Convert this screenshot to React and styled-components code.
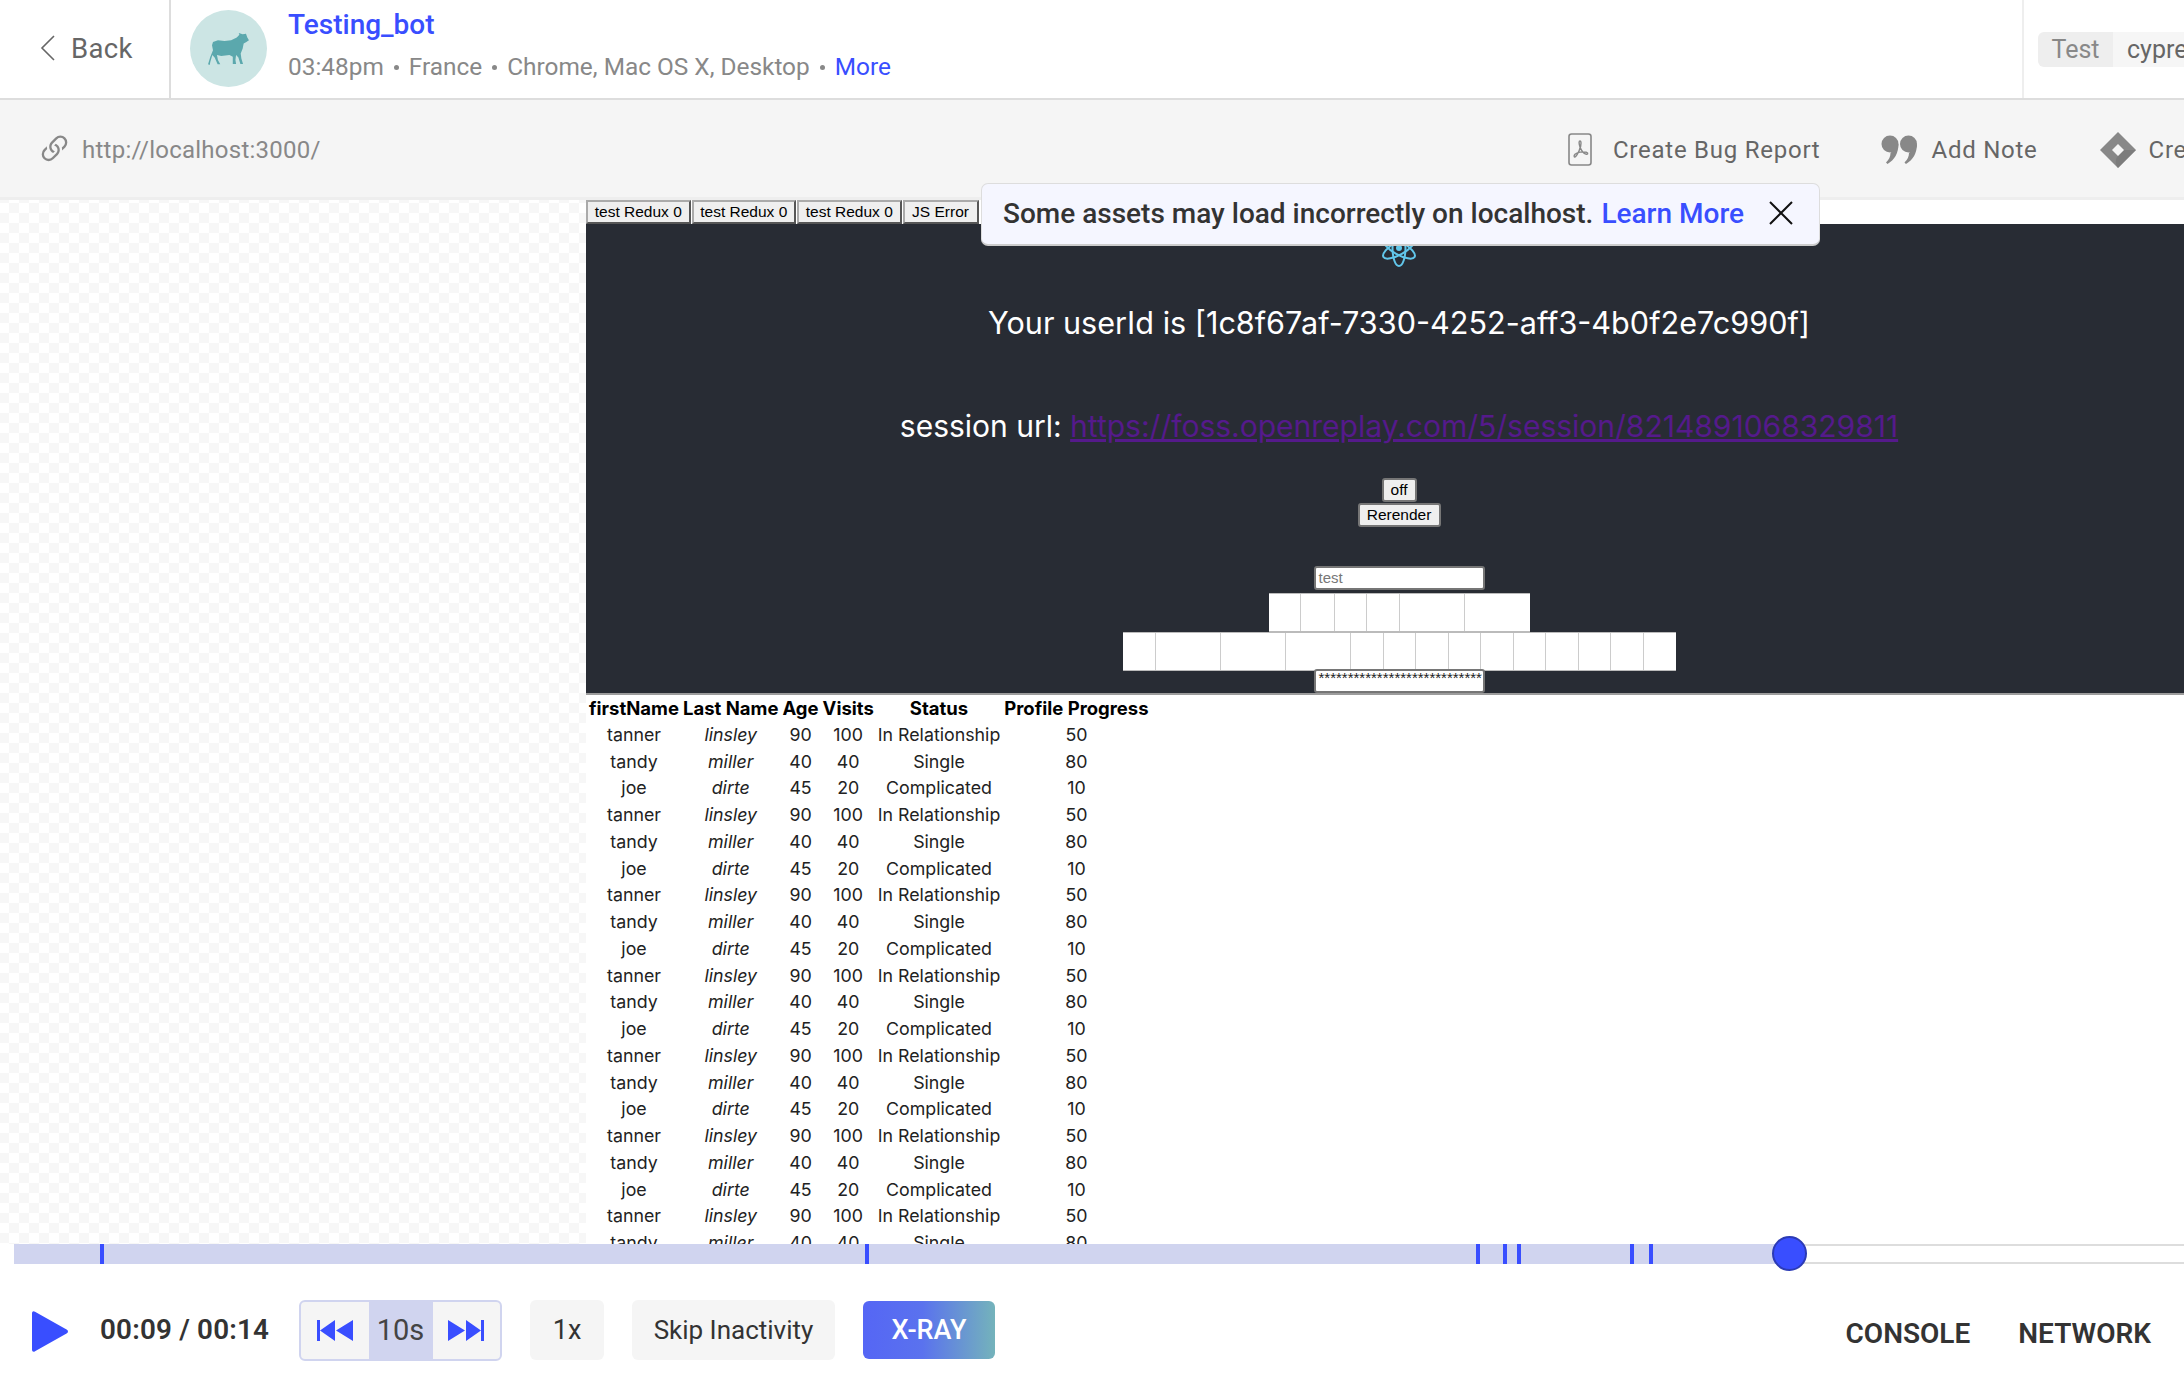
import React from 'react';
import styled, { createGlobalStyle } from 'styled-components';
import { BsLink45Deg } from 'react-icons/bs';

const Global = createGlobalStyle`
  html, body { margin: 0; padding: 0; background: #fff; overflow: hidden; }
  #root { width: 2184px; height: 1396px; overflow: hidden; }
  * { box-sizing: border-box; }
`;

const Page = styled.div`
  width: 2184px; height: 1396px; display: flex; flex-direction: column;
  font-family: Roboto, "Liberation Sans", sans-serif; color: #666; overflow: hidden; position: relative;
`;

/* header */
const Header = styled.header`
  height: 100px; flex: none; display: flex; align-items: stretch; background: #fff;
  border-bottom: 2px solid #ddd;
`;
const BackLink = styled.div`
  width: 171px; flex: none; display: flex; align-items: center; gap: 16px; padding-left: 40px;
  border-right: 2px solid #ddd; font-size: 27.5px; color: #666; letter-spacing: .3px;
  padding-bottom: 2px;
`;
const UserBlock = styled.div`
  flex: 1; display: flex; align-items: center; gap: 21px; padding-left: 19px;
`;
const Avatar = styled.div`
  width: 77px; height: 77px; border-radius: 50%; background: #cce5e4; display: flex;
  align-items: center; justify-content: center; flex: none; margin-bottom: 1px;
`;
const UserText = styled.div`
  display: flex; flex-direction: column; gap: 10px; margin-top: -6px;
`;
const UserName = styled.div`
  font-size: 28px; line-height: 32px; font-weight: 500; color: #394eff;
`;
const Meta = styled.div`
  font-size: 24.4px; line-height: 32px; color: #888; display: flex; align-items: center; white-space: nowrap;
`;
const Dot = styled.span`
  width: 5px; height: 5px; border-radius: 50%; background: #888; margin: 0 10px;
`;
const Accent = styled.span`
  color: #394eff;
`;
const TagArea = styled.div`
  width: 162px; flex: none; border-left: 2px solid #eee; display: flex; align-items: center; padding-left: 14px;
  overflow: hidden; margin-bottom: 0;
`;
const TagGroup = styled.div`
  display: flex; height: 35px; border-radius: 6px; overflow: hidden; font-size: 25px; line-height: 35px; flex: none;
`;
const TagKey = styled.span`
  width: 75px; background: #eee; color: #888; text-align: center;
`;
const TagValue = styled.span`
  background: #f6f6f6; color: #666; padding: 0 14px; 
`;

/* url bar */
const UrlBar = styled.div`
  height: 100px; flex: none; display: flex; align-items: center; background: #f5f5f5;
  border-bottom: 3px solid #eee; overflow: hidden; padding-top: 2px;
`;
const UrlText = styled.div`
  flex: 0 0 1568px; display: flex; align-items: center; gap: 9px; padding-left: 36px; font-size: 24px; color: #888; letter-spacing: .25px;
`;
const Actions = styled.div`
  display: flex; align-items: center; gap: 61px; flex: none; font-size: 24px; color: #666; letter-spacing: .75px;
`;
const Action = styled.div`
  display: flex; align-items: center; gap: ${p => p.$gap || 13}px; white-space: nowrap;
`;
const DiamondAction = styled(Action)`
  margin-left: 1px;
`;

/* stage */
const Stage = styled.div`
  height: 1044px; flex: none; display: flex; position: relative; overflow: hidden;
`;
const Checker = styled.div`
  width: 586px; flex: none;
  background: repeating-conic-gradient(#f7f7f7 0 25%, #fff 0 50%) -1px 3px / 20px 20px;
`;
const Replay = styled.div`
  flex: 1; display: flex; flex-direction: column; align-items: flex-start; background: #fff; overflow: hidden; min-width: 0;
`;
const Tabs = styled.div`
  display: flex; height: 24px; flex: none; padding-left: 0;
`;
const NativeButton = styled.button`
  font-family: "Liberation Sans", Arial, sans-serif; font-size: 15.5px; color: #000; background: #efefef;
  border: 2px outset #aaa; padding: 0; height: 100%; margin: 0; width: ${p => p.$w}px; flex: none; margin-right: 1px;
  display: flex; align-items: center; justify-content: center; 
`;
const AppShell = styled.div`
  width: 1626px; height: 469px; flex: none; background: #282c34; display: flex; flex-direction: column; align-items: center;
  color: #fff; overflow: hidden;
`;
const Logo = styled.div`
  height: 44px; margin-top: 2px; line-height: 0; flex: none;
`;
const UserId = styled.p`
  margin: 31px 0 0; font-family: Inter, Roboto, sans-serif; font-size: 30.6px; line-height: 44px; font-weight: 400; white-space: nowrap;
`;
const SessionLine = styled.p`
  margin: 59px 0 0; font-family: Inter, Roboto, sans-serif; font-size: 30px; line-height: 44px; white-space: nowrap;
`;
const SessionLink = styled.a`
  color: #551a8b; text-decoration: underline;
`;
const SmallButton = styled.button`
  font-family: "Liberation Sans", Arial, sans-serif; font-size: 15.5px; color: #000; background: #efefef;
  border: 2px solid #767676; border-radius: 3px; height: 24px; padding: 0; width: ${p => p.$w}px; flex: none;
  margin-top: ${p => p.$mt || 0}px; display: block;
`;
const TextField = styled.div`
  width: 171px; height: 24px; background: #fff; border: 2px solid #767676; border-radius: 3px; flex: none;
  margin-top: ${p => p.$mt || 0}px; padding: 0 3px; font-family: "Liberation Sans", Arial, sans-serif;
  font-size: 15px; line-height: ${p => p.$lh}px; color: ${p => p.$color}; overflow: hidden; white-space: nowrap;
`;
const CellRow = styled.div`
  display: flex; flex: none; margin-top: ${p => p.$mt || 0}px; height: 39px; background: #fff;
  border: 1px solid #bbb; border-left: 0; border-right: 0;
`;
const Cell = styled.div`
  height: 100%; width: ${p => p.$w}px; flex: none; border-right: 1px solid #ccc;
  &:last-child { border-right: 0; }
`;
const DataWrap = styled.div`
  align-self: stretch; flex: none; border-top: 2px solid #9c9c9c; margin-top: 0;
`;
const Table = styled.table`
  border-collapse: separate; border-spacing: 4px 0; margin: 0 0 0 -1px;
  font-family: Inter, "Liberation Sans", sans-serif; font-size: 17.8px; color: #222; line-height: 26.75px;
  th { color: #000; font-weight: 700; font-size: 18.5px; white-space: nowrap; padding: 0; }
  td { text-align: center; padding: 0; white-space: nowrap; }
  td:nth-child(2) { font-style: italic; }
`;

/* timeline */
const Timeline = styled.div`
  height: 20px; flex: none; position: relative; margin-left: 14px;
  border-top: 2px solid #ddd; border-bottom: 2px solid #ddd; background: #fff;
`;
const Played = styled.div`
  position: absolute; left: 0; top: -2px; bottom: -2px; width: 1775px; background: #d0d4ef;
`;
const Marker = styled.span`
  position: absolute; top: -2px; bottom: -2px; width: 4px; background: #394eff; left: ${p => p.$x - 14}px;
`;
const Knob = styled.span`
  position: absolute; left: ${1772 - 14}px; top: -10px; width: 35px; height: 35px; border-radius: 50%;
  background: #394eff; border: 2px solid #2c3bb5;
`;

/* bottom */
const Controls = styled.div`
  flex: 1; display: flex; align-items: center; padding: 0 33px 0 32px; background: #fff;
`;
const PlayBtn = styled.div`
  width: 36px; height: 41px; flex: none; line-height: 0; margin-top: 2px;
`;
const TimeText = styled.div`
  margin-left: 32px; width: 199px; flex: none; font-size: 27.8px; font-weight: 600; color: #333; letter-spacing: .2px; white-space: nowrap; margin-top: -2px;
`;
const SkipGroup = styled.div`
  display: flex; height: 61px; width: 203px; flex: none; border: 2px solid #d0d4ef; border-radius: 6px; overflow: hidden; background: #f5f5f5;
`;
const SkipBtn = styled.div`
  flex: 1; display: flex; align-items: center; justify-content: center;
`;
const SkipValue = styled.div`
  width: 64px; flex: none; background: #d0d4ef; display: flex; align-items: center; justify-content: center;
  font-size: 29px; color: #444;
`;
const Pill = styled.div`
  height: 60px; background: #f5f5f5; border-radius: 6px; display: flex; align-items: center; justify-content: center;
  font-size: ${p => p.$fs || 27}px; color: #333; width: ${p => p.$w}px; margin-left: 28px; flex: none;
`;
const XRay = styled.div`
  height: 58px; width: 132px; flex: none; margin-left: 28px; border-radius: 6px; display: flex; align-items: center; justify-content: center;
  background: linear-gradient(90deg, #5566f5 0%, #5a72ee 45%, #74b3bb 100%); color: #fff; font-size: 27px; font-weight: 500;
`;
const RightTabs = styled.div`
  margin-left: auto; display: flex; gap: 48px; font-size: 28px; font-weight: 600; color: #333; padding-top: 6px;
`;
const Toast = styled.div`
  position: absolute; left: 981px; top: 183px; width: 839px; height: 63px; background: #f5f6ff;
  border: 1px solid #ddd; border-bottom: 2px solid #ccc; border-radius: 7px; display: flex; align-items: center;
  padding: 0 0 2px 21px; font-size: 28px; font-weight: 500; color: #333; white-space: nowrap;
`;
const ToastLink = styled.span`
  color: #394eff; margin-left: 8px;
`;
const ToastClose = styled.span`
  margin-left: 24px; line-height: 0; display: flex;
`;
const FlippedIcon = styled.svg`
  transform: ${p => (p.$flip ? 'scaleX(-1)' : 'none')};
`;

const Chevron = () => (
  <svg width="15" height="26" viewBox="0 0 15 26" fill="none" stroke="#666" strokeWidth="1.6">
    <path d="M14 1L2 13l12 12" />
  </svg>
);

const Sheep = () => (
  <svg width="41" height="32" viewBox="85 98 124 97">
    <path fill="#5ba8ad" d="M100 125L115 120 135 122 155 120 172 112 180 103 178 98 190 102 200 100 204 112 209 120 200 126 193 130 190 145 184 160 186 175 191 192 183 192 177 172 170 165 168 180 170 192 160 192 160 170 150 165 125 168 112 165 115 180 122 193 114 193 105 172 98 165 92 185 90 195 85 193 92 170 100 150 97 135z" />
  </svg>
);

const Pdf = () => (
  <svg width="24" height="33" viewBox="0 0 24 33" fill="none" stroke="#888">
    <rect x="1" y="1" width="22" height="31" rx="2.5" strokeWidth="1.6" />
    <path strokeWidth="1.4" d="M12 8c-1.2 0-1.2 2 0 6 1.5 4 4 6.6 6 7.2 2 .5 2.3-1.4.5-1.9-4-1-9.5 0-11.5 2-1.6 1.8-.8 3.6.7 2.2 1.8-1.7 5.5-9 5.3-13.2C13 9.3 12.8 8 12 8z" />
  </svg>
);

const Quote = () => (
  <svg width="37" height="30" viewBox="0 0 37 30" fill="#888">
    <circle cx="9" cy="9" r="8.5" />
    <path d="M17.5 9c0 9-4 16-11 20L5 27.5c3-3 4.5-6 4.5-9.5z" />
    <circle cx="27.5" cy="9" r="8.5" />
    <path d="M36 9c0 9-4 16-11 20l-1.5-1.500c3-3 4.5-6 4.5-9.5z" />
  </svg>
);

const Diamond = () => (
  <svg width="36" height="36" viewBox="0 0 36 36">
    <path fill="#888" d="M18 0l18 18-18 18L0 18z" />
    <path fill="#777" d="M18 24l6-6h12L18 36c-3-4-3-9 0-12z" opacity=".7" />
    <path fill="#f5f5f5" d="M18 12l6 6-6 6-6-6z" />
  </svg>
);

const Close = () => (
  <svg width="26" height="26" viewBox="0 0 26 26" stroke="#111" strokeWidth="2">
    <path d="M2 2l22 22M24 2L2 24" />
  </svg>
);

const ReactLogo = () => (
  <svg width="40" height="44" viewBox="0 0 40 44" fill="none" stroke="#61c6ea" strokeWidth="2">
    <g transform="translate(20 22)">
      <circle r="3" fill="#61c6ea" stroke="none" />
      <ellipse rx="18" ry="6.5" transform="rotate(90)" />
      <ellipse rx="18" ry="6.5" transform="rotate(30)" />
      <ellipse rx="18" ry="6.5" transform="rotate(150)" />
    </g>
  </svg>
);

const Rewind = ({ flip }) => (
  <FlippedIcon $flip={flip} width="36" height="21" viewBox="0 0 36 21" fill="#394eff">
    <rect x="0" y="0" width="3" height="21" />
    <path d="M3 10.5L18 0v21zM19 10.5L36 0v21z" />
  </FlippedIcon>
);

const rows = [
  ['tanner', 'linsley', 90, 100, 'In Relationship', 50],
  ['tandy', 'miller', 40, 40, 'Single', 80],
  ['joe', 'dirte', 45, 20, 'Complicated', 10],
];
const allRows = Array.from({ length: 21 }, (_, i) => rows[i % 3]);
const markers = [100, 865, 1476, 1503, 1517, 1630, 1649];
const row1 = [32, 34, 32, 33, 65, 65];
const row2 = [33, 65, 65, 65, 33, 32, 33, 32, 33, 32, 33, 32, 33, 32];

export default function App() {
  return (
    <Page>
      <Global />
      <Header>
        <BackLink><Chevron />Back</BackLink>
        <UserBlock>
          <Avatar><Sheep /></Avatar>
          <UserText>
            <UserName>Testing_bot</UserName>
            <Meta>03:48pm<Dot />France<Dot />Chrome, Mac OS X, Desktop<Dot /><Accent>More</Accent></Meta>
          </UserText>
        </UserBlock>
        <TagArea>
          <TagGroup><TagKey>Test</TagKey><TagValue>cypress</TagValue></TagGroup>
        </TagArea>
      </Header>
      <UrlBar>
        <UrlText><BsLink45Deg size={37} color="#888" />http://localhost:3000/</UrlText>
        <Actions>
          <Action $gap={21}><Pdf />Create Bug Report</Action>
          <Action><Quote />Add Note</Action>
          <DiamondAction><Diamond />Create Issue</DiamondAction>
        </Actions>
      </UrlBar>
      <Stage>
        <Checker />
        <Replay>
          <Tabs>
            <NativeButton $w={104.5}>test Redux 0</NativeButton>
            <NativeButton $w={104.5}>test Redux 0</NativeButton>
            <NativeButton $w={104.5}>test Redux 0</NativeButton>
            <NativeButton $w={76}>JS Error</NativeButton>
          </Tabs>
          <AppShell>
            <Logo><ReactLogo /></Logo>
            <UserId>Your userId is [1c8f67af-7330-4252-aff3-4b0f2e7c990f]</UserId>
            <SessionLine>session url: <SessionLink>https://foss.openreplay.com/5/session/8214891068329811</SessionLink></SessionLine>
            <SmallButton $w={35} $mt={30}>off</SmallButton>
            <SmallButton $w={83} $mt={1}>Rerender</SmallButton>
            <TextField $mt={39} $lh={20} $color="#777">test</TextField>
            <CellRow $mt={3}>{row1.map((w, i) => <Cell key={i} $w={w} />)}</CellRow>
            <CellRow>{row2.map((w, i) => <Cell key={i} $w={w} />)}</CellRow>
            <TextField $mt={-2} $lh={14} $color="#222">****************************</TextField>
          </AppShell>
          <DataWrap>
            <Table>
              <thead>
                <tr><th>firstName</th><th>Last Name</th><th>Age</th><th>Visits</th><th>Status</th><th>Profile Progress</th></tr>
              </thead>
              <tbody>
                {allRows.map((r, i) => (
                  <tr key={i}>{r.map((c, j) => <td key={j}>{c}</td>)}</tr>
                ))}
              </tbody>
            </Table>
          </DataWrap>
        </Replay>
      </Stage>
      <Timeline>
        <Played />
        {markers.map(x => <Marker key={x} $x={x} />)}
        <Knob />
      </Timeline>
      <Controls>
        <PlayBtn>
          <svg width="36" height="41" viewBox="0 0 36 41"><path fill="#394eff" d="M0 2.5C0 .5 1.5-.5 3 .8l32 18c1.3 1 1.3 2.4 0 3.4l-32 18C1.5 41.5 0 40.5 0 38.5z" /></svg>
        </PlayBtn>
        <TimeText>00:09 / 00:14</TimeText>
        <SkipGroup>
          <SkipBtn><Rewind /></SkipBtn>
          <SkipValue>10s</SkipValue>
          <SkipBtn><Rewind flip /></SkipBtn>
        </SkipGroup>
        <Pill $w={74}>1x</Pill>
        <Pill $w={203} $fs={26}>Skip Inactivity</Pill>
        <XRay>X-RAY</XRay>
        <RightTabs><span>CONSOLE</span><span>NETWORK</span></RightTabs>
      </Controls>
      <Toast>
        <span>Some assets may load incorrectly on localhost.</span>
        <ToastLink>Learn More</ToastLink>
        <ToastClose><Close /></ToastClose>
      </Toast>
    </Page>
  );
}
